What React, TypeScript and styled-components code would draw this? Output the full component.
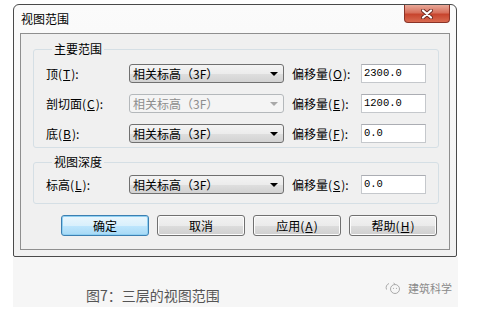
import React from 'react'
import styled, { createGlobalStyle } from 'styled-components'

const GlobalStyle = createGlobalStyle`
  html, body {
    margin: 0;
    padding: 0;
    background: #ffffff;
  }
  body {
    font-family: "Noto Sans CJK SC", "Noto Sans", sans-serif;
    font-size: 12px;
    color: #000;
  }
`

const Page = styled.div`
  width: 489px;
  height: 316px;
  padding: 4px 0 0 13px;
  box-sizing: border-box;
`

const Dialog = styled.div`
  width: 444px;
  height: 253px;
  box-sizing: border-box;
  border: 1px solid #4a4a4a;
  border-radius: 6px 6px 2px 2px;
  background: linear-gradient(#fbfbfb, #f1f1f1);
  padding: 0 6px 6px;
  display: flex;
  flex-direction: column;
`

const TitleBar = styled.div`
  height: 28px;
  display: flex;
  justify-content: space-between;
  align-items: flex-start;
  flex-shrink: 0;
`

const Title = styled.div`
  line-height: 28px;
  padding-left: 1px;
  font-size: 12px;
`

const CloseButton = styled.div`
  width: 46px;
  height: 18px;
  box-sizing: border-box;
  border: 1px solid #8a3327;
  border-top: none;
  border-radius: 0 0 4px 4px;
  background: linear-gradient(#e9a999 0%, #d7705c 45%, #c7452e 55%, #d96a50 100%);
  display: flex;
  align-items: center;
  justify-content: center;
`

const Client = styled.div`
  flex: 1;
  border: 1px solid #8f8f8f;
  background: #f0f0f0;
  padding: 7px 10px 11px 12px;
  display: flex;
  flex-direction: column;
`

const Group = styled.fieldset<{ $top: number; $bottom: number; $gap?: number }>`
  margin: 0 0 6px;
  min-width: 0;
  border: 1px solid #d5dfe5;
  border-radius: 3px;
  padding: ${(p) => p.$top}px 0 ${(p) => p.$bottom}px 12px;
  display: flex;
  flex-direction: column;
  gap: 11px;
`

const Legend = styled.legend`
  margin-left: 6px;
  padding: 0 2px;
  line-height: 16px;
  font-size: 12px;
`

const Row = styled.div`
  display: flex;
  align-items: center;
  height: 19px;
`

const Label = styled.div<{ $width: number; $dim?: boolean }>`
  width: ${(p) => p.$width}px;
  flex-shrink: 0;
  color: #000;
  line-height: 19px;
`

const Key = styled.span`
  text-decoration: underline;
  padding: 0 1px;
`

const Select = styled.div<{ $disabled?: boolean }>`
  width: 155px;
  height: 19px;
  box-sizing: border-box;
  margin-right: 8px;
  border: 1px solid ${(p) => (p.$disabled ? '#b4b8bb' : '#707070')};
  border-radius: 3px;
  background: ${(p) =>
    p.$disabled
      ? '#f4f4f4'
      : 'linear-gradient(#f4f4f4 0%, #ececec 50%, #dfdfdf 51%, #d2d2d2 100%)'};
  color: ${(p) => (p.$disabled ? '#8d8d8d' : '#000')};
  display: flex;
  align-items: center;
  justify-content: space-between;
  padding: 0 5px 0 3px;
  line-height: 17px;
  white-space: nowrap;
`

const Arrow = styled.span<{ $disabled?: boolean }>`
  width: 0;
  height: 0;
  border-left: 4px solid transparent;
  border-right: 4px solid transparent;
  border-top: 4px solid ${(p) => (p.$disabled ? '#a8a8a8' : '#000')};
`

const Field = styled.div`
  width: 65px;
  height: 19px;
  box-sizing: border-box;
  border: 1px solid #c5c8cc;
  border-top-color: #abadb3;
  background: #fff;
  padding-left: 2px;
  font-family: "Liberation Mono", monospace;
  font-size: 10.5px;
  line-height: 17px;
`

const ButtonRow = styled.div`
  margin-top: 5px;
  display: flex;
  justify-content: flex-end;
  gap: 8px;
  padding-right: 2px;
`

const Button = styled.div<{ $primary?: boolean }>`
  width: 88px;
  height: 21px;
  box-sizing: border-box;
  border: 1px solid ${(p) => (p.$primary ? '#3c7fb1' : '#707070')};
  border-radius: 3px;
  background: ${(p) =>
    p.$primary
      ? 'linear-gradient(#eaf6fd 0%, #d9f0fc 50%, #bee6fd 51%, #a7d9f5 100%)'
      : 'linear-gradient(#f2f2f2 0%, #ebebeb 50%, #dddddd 51%, #cfcfcf 100%)'};
  box-shadow: ${(p) => (p.$primary ? 'inset 0 0 0 1px #8fd0f2' : 'inset 0 0 0 1px #fcfcfc')};
  display: flex;
  align-items: center;
  justify-content: center;
  font-size: 12px;
`

const CaptionBand = styled.div`
  width: 445px;
  height: 50px;
  background: #f6f6f6;
  display: flex;
  justify-content: space-between;
  align-items: flex-start;
`

const Caption = styled.div`
  margin: 29px 0 0 73px;
  font-size: 14px;
  line-height: 18px;
  color: #555;
`

const Watermark = styled.div`
  margin: 23px 6px 0 0;
  display: flex;
  align-items: center;
  gap: 6px;
  font-size: 11px;
  line-height: 16px;
  color: #8a8a8a;
`

const WeChatIcon = () => (
  <svg width="18" height="14" viewBox="0 0 18 14" fill="none" stroke="#aaa" strokeWidth="1">
    <path d="M5 2.5 C2.5 3.5 1.5 6 2.5 8.5" />
    <circle cx="11" cy="8" r="4.5" />
    <circle cx="9.5" cy="7.3" r="0.6" fill="#aaa" stroke="none" />
    <circle cx="12.5" cy="7.3" r="0.6" fill="#aaa" stroke="none" />
    <path d="M9.5 2 L11 3.2" />
  </svg>
)

const CloseGlyph = () => (
  <svg width="12" height="10" viewBox="0 0 12 10">
    <path d="M2 1.5 L10 8.5 M10 1.5 L2 8.5" stroke="#6b2a22" strokeWidth="4" strokeLinecap="round" />
    <path d="M2 1.5 L10 8.5 M10 1.5 L2 8.5" stroke="#ffffff" strokeWidth="2.2" strokeLinecap="round" />
  </svg>
)

const KeyLabel: React.FC<{ text: string; k: string; width: number }> = ({ text, k, width }) => (
  <Label $width={width}>
    {text}(<Key>{k}</Key>):
  </Label>
)

const rows = [
  { label: '顶', key: 'T', offsetKey: 'O', value: '2300.0' },
  { label: '剖切面', key: 'C', offsetKey: 'E', value: '1200.0', disabled: true },
  { label: '底', key: 'B', offsetKey: 'F', value: '0.0' }
]

const LevelRow: React.FC<{
  label: string
  k: string
  offsetKey: string
  value: string
  disabled?: boolean
}> = ({ label, k, offsetKey, value, disabled }) => (
  <Row>
    <KeyLabel text={label} k={k} width={83} />
    <Select $disabled={disabled}>
      <span>相关标高（3F）</span>
      <Arrow $disabled={disabled} />
    </Select>
    <KeyLabel text="偏移量" k={offsetKey} width={69} />
    <Field>{value}</Field>
  </Row>
)

const App: React.FC = () => {
  return (
    <Page>
      <GlobalStyle />
      <Dialog>
        <TitleBar>
          <Title>视图范围</Title>
          <CloseButton>
            <CloseGlyph />
          </CloseButton>
        </TitleBar>
        <Client>
          <Group $top={7} $bottom={4}>
            <Legend>主要范围</Legend>
            {rows.map((r) => (
              <LevelRow
                key={r.key}
                label={r.label}
                k={r.key}
                offsetKey={r.offsetKey}
                value={r.value}
                disabled={r.disabled}
              />
            ))}
          </Group>
          <Group $top={5} $bottom={9}>
            <Legend>视图深度</Legend>
            <LevelRow label="标高" k="L" offsetKey="S" value="0.0" />
          </Group>
          <ButtonRow>
            <Button $primary>确定</Button>
            <Button>取消</Button>
            <Button>
              应用(<Key>A</Key>)
            </Button>
            <Button>
              帮助(<Key>H</Key>)
            </Button>
          </ButtonRow>
        </Client>
      </Dialog>
      <CaptionBand>
        <Caption>图7：三层的视图范围</Caption>
        <Watermark>
          <WeChatIcon />
          建筑科学
        </Watermark>
      </CaptionBand>
    </Page>
  )
}

export default App
